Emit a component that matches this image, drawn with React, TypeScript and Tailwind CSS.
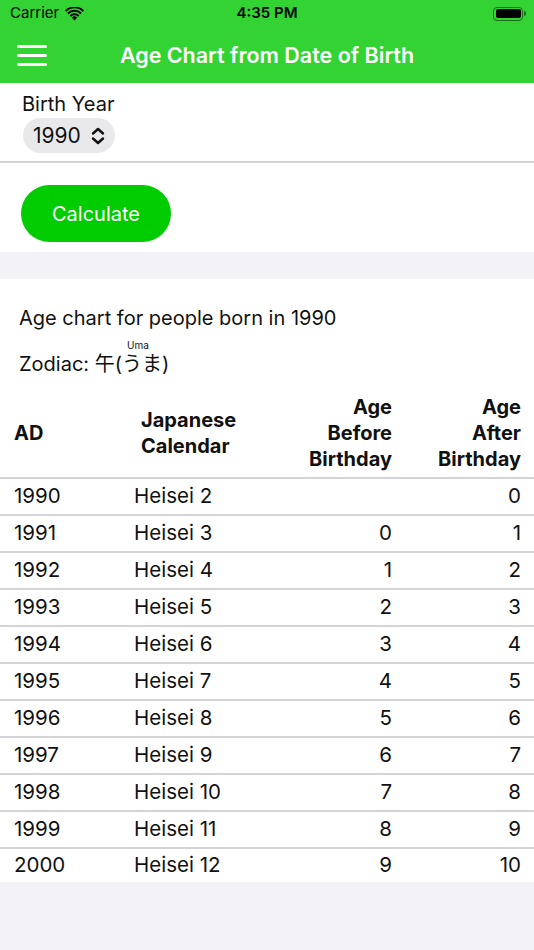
import React from "react";

const rows: [string, string, string, string][] = [
  ["1990", "Heisei 2", "", "0"],
  ["1991", "Heisei 3", "0", "1"],
  ["1992", "Heisei 4", "1", "2"],
  ["1993", "Heisei 5", "2", "3"],
  ["1994", "Heisei 6", "3", "4"],
  ["1995", "Heisei 7", "4", "5"],
  ["1996", "Heisei 8", "5", "6"],
  ["1997", "Heisei 9", "6", "7"],
  ["1998", "Heisei 10", "7", "8"],
  ["1999", "Heisei 11", "8", "9"],
  ["2000", "Heisei 12", "9", "10"],
];

export default function App() {
  return (
    <div
      className="w-[534px] min-h-[950px] bg-[#f2f2f7] text-[#111]"
      style={{ fontFamily: 'Inter, "Noto Sans CJK JP", sans-serif' }}
    >
      {/* Header */}
      <div className="bg-[#33d333]">
        <div className="h-[27px] flex items-center justify-between px-[10px] relative">
          <div className="flex items-center gap-[6px] text-[15px] text-black">
            <span>Carrier</span>
            <svg width="19" height="14" viewBox="0 0 19 14">
              <path d="M9.5 13.5 L6.8 10.6 A4 4 0 0 1 12.2 10.6 Z" fill="#000" />
              <path d="M4.6 8.3 A7 7 0 0 1 14.4 8.3 L13.1 9.7 A5.2 5.2 0 0 0 5.9 9.7 Z" fill="#000" />
              <path d="M2.2 5.8 A10.4 10.4 0 0 1 16.8 5.8 L15.5 7.2 A8.5 8.5 0 0 0 3.5 7.2 Z" fill="#000" />
              <path d="M0 3.3 A13.6 13.6 0 0 1 19 3.3 L17.7 4.7 A11.7 11.7 0 0 0 1.3 4.7 Z" fill="#000" />
            </svg>
          </div>
          <div className="absolute left-0 right-0 text-center text-[15px] font-semibold text-black pointer-events-none">
            4:35 PM
          </div>
          <div className="flex items-center mr-[-2px]">
            <div className="w-[30px] h-[14px] rounded-[4px] border-[1.5px] border-[#1a6e1a] p-[1.5px]">
              <div className="w-full h-full rounded-[2px] bg-black" />
            </div>
            <div className="w-[2px] h-[5px] rounded-r-sm bg-[#1a6e1a] ml-[1px]" />
          </div>
        </div>
        <div className="h-[56px] flex items-center relative">
          <div className="ml-[17px] flex flex-col gap-[6px]">
            <div className="w-[30px] h-[3px] bg-white rounded-sm" />
            <div className="w-[30px] h-[3px] bg-white rounded-sm" />
            <div className="w-[30px] h-[3px] bg-white rounded-sm" />
          </div>
          <div className="absolute left-0 right-0 text-center text-[21.5px] font-semibold text-white pointer-events-none">
            Age Chart from Date of Birth
          </div>
        </div>
      </div>

      {/* Form */}
      <div className="bg-white">
        <div className="pt-[8px] px-[22px] text-[20px] leading-[26px]">Birth Year</div>
        <div className="px-[23px] mt-[1px]">
          <div className="w-[92px] h-[35px] rounded-full bg-[#e9e9eb] flex items-center pl-[10px] gap-[9px] text-[21px]">
            <span>1990</span>
            <svg width="16" height="18" viewBox="0 0 16 18" fill="none" stroke="#111" strokeWidth="2.4" strokeLinecap="round" strokeLinejoin="round">
              <path d="M3 6.5 L8 2 L13 6.5" />
              <path d="M3 11.5 L8 16 L13 11.5" />
            </svg>
          </div>
        </div>
        <div className="mt-[8px] h-[2px] bg-[#d4d4d6]" />
        <div className="pt-[22px] pb-[10px] px-[21px]">
          <button className="w-[150px] h-[57px] rounded-full bg-[#00cc00] text-white text-[20px]">
            Calculate
          </button>
        </div>
      </div>

      <div className="h-[27px]" />

      {/* Result */}
      <div className="bg-white pt-[26px]">
        <div className="px-[19px] text-[20px] leading-[26px]">Age chart for people born in 1990</div>
        <div className="mt-[8px] pl-[127px] text-[10px] leading-[12px]">Uma</div>
        <div className="px-[19px] text-[20px] leading-[26px]">Zodiac: 午(うま)</div>

        <table className="mt-[17px] w-[534px] border-collapse table-fixed">
          <colgroup>
            <col className="w-[134px]" />
            <col className="w-[128px]" />
            <col className="w-[130px]" />
            <col className="w-[142px]" />
          </colgroup>
          <thead>
            <tr className="border-b-2 border-[#d4d4d6] text-[20px] leading-[26px] font-bold">
              <th className="text-left align-middle font-bold pl-[14px] pb-[5px]">AD</th>
              <th className="text-left align-middle font-bold pl-[7px] pb-[5px]">
                Japanese
                <br />
                Calendar
              </th>
              <th className="text-right align-middle font-bold pb-[5px]">
                Age
                <br />
                Before
                <br />
                Birthday
              </th>
              <th className="text-right align-middle font-bold pr-[13px] pb-[5px]">
                Age
                <br />
                After
                <br />
                Birthday
              </th>
            </tr>
          </thead>
          <tbody className="text-[20.5px]">
            {rows.map((r, i) => (
              <tr
                key={r[0]}
                className={
                  i < rows.length - 1
                    ? "h-[37px] border-b-2 border-[#d4d4d6]"
                    : "h-[34px]"
                }
              >
                <td className="text-left pl-[14px]">{r[0]}</td>
                <td className="text-left">{r[1]}</td>
                <td className="text-right">{r[2]}</td>
                <td className="text-right pr-[13px]">{r[3]}</td>
              </tr>
            ))}
          </tbody>
        </table>
      </div>
    </div>
  );
}
